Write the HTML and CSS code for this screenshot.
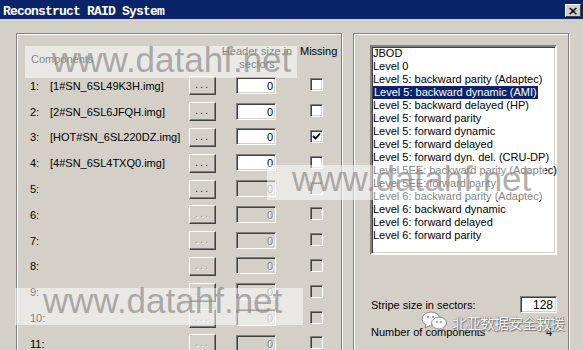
FILE: index.html
```html
<!DOCTYPE html>
<html lang="en">
<head>
    <meta charset="UTF-8">
    <meta name="viewport" content="width=device-width, initial-scale=1.0">
    <title>Reconstruct RAID System</title>
    <link rel="stylesheet" href="styles.css">
</head>
<body>
    <div class="titlebar">
        <span class="title">Reconstruct RAID System</span>
        <span class="close">&#215;</span>
    </div>
    <div class="dialog">
        <div class="group left-group">
            <div class="head">
                <span class="h-comp">Components</span>
                <span class="h-size">Header size in<br>sectors</span>
                <span class="h-miss">Missing</span>
            </div>
            <div class="row">
                <span class="num">1:</span><span class="file">[1#SN_6SL49K3H.img]</span>
                <span class="browse">...</span><span class="size">0</span><span class="check"></span>
            </div>
            <div class="row">
                <span class="num">2:</span><span class="file">[2#SN_6SL6JFQH.img]</span>
                <span class="browse">...</span><span class="size">0</span><span class="check"></span>
            </div>
            <div class="row">
                <span class="num">3:</span><span class="file">[HOT#SN_6SL220DZ.img]</span>
                <span class="browse">...</span><span class="size">0</span>
                <span class="check"><svg width="11" height="11" viewBox="0 0 11 11"><polyline points="2,5 4.5,7.5 9,2.5" fill="none" stroke="#000" stroke-width="1.8"/></svg></span>
            </div>
            <div class="row">
                <span class="num">4:</span><span class="file">[4#SN_6SL4TXQ0.img]</span>
                <span class="browse">...</span><span class="size">0</span><span class="check"></span>
            </div>
            <div class="row">
                <span class="num">5:</span><span class="file"></span>
                <span class="browse">...</span><span class="size off">0</span><span class="check off"></span>
            </div>
            <div class="row">
                <span class="num">6:</span><span class="file"></span>
                <span class="browse off">...</span><span class="size off">0</span><span class="check off"></span>
            </div>
            <div class="row">
                <span class="num">7:</span><span class="file"></span>
                <span class="browse off">...</span><span class="size off">0</span><span class="check off"></span>
            </div>
            <div class="row">
                <span class="num">8:</span><span class="file"></span>
                <span class="browse off">...</span><span class="size off">0</span><span class="check off"></span>
            </div>
            <div class="row">
                <span class="num">9:</span><span class="file"></span>
                <span class="browse off">...</span><span class="size off">0</span><span class="check off"></span>
            </div>
            <div class="row">
                <span class="num">10:</span><span class="file"></span>
                <span class="browse off">...</span><span class="size off">0</span><span class="check off"></span>
            </div>
            <div class="row">
                <span class="num">11:</span><span class="file"></span>
                <span class="browse off">...</span><span class="size off">0</span><span class="check off"></span>
            </div>
        </div>

        <div class="group right-group">
            <div class="listbox">
                <div class="item">JBOD</div>
                <div class="item">Level 0</div>
                <div class="item">Level 5: backward parity (Adaptec)</div>
                <div class="item"><span class="selected">Level 5: backward dynamic (AMI)</span></div>
                <div class="item">Level 5: backward delayed (HP)</div>
                <div class="item">Level 5: forward parity</div>
                <div class="item">Level 5: forward dynamic</div>
                <div class="item">Level 5: forward delayed</div>
                <div class="item">Level 5: forward dyn. del. (CRU-DP)</div>
                <div class="item">Level 5EE: backward parity (Adaptec)</div>
                <div class="item">Level 5EE: forward parity</div>
                <div class="item">Level 6: backward parity (Adaptec)</div>
                <div class="item">Level 6: backward dynamic</div>
                <div class="item">Level 6: forward delayed</div>
                <div class="item">Level 6: forward parity</div>
            </div>
            <div class="stripe">
                <span>Stripe size in sectors:</span>
                <span class="stripe-input">128</span>
            </div>
            <div class="count">
                <span>Number of components</span>
                <span>4</span>
            </div>
        </div>
    </div>

    <!-- watermarks over the screenshot -->
    <div class="wm-band band1"></div>
    <div class="wm-text text1">www.datahf.net</div>
    <div class="wm-band band2"></div>
    <div class="wm-text text2">www.datahf.net</div>
    <div class="wm-band band3"></div>
    <div class="wm-text text3">www.datahf.net</div>
    <div class="wechat">
        <svg width="27" height="20" viewBox="0 0 27 20">
            <ellipse cx="10" cy="8" rx="9" ry="7" fill="#fafafa" stroke="#8a8a8a" stroke-width="1"/>
            <path d="M5 13 L4 17 L9 14.5" fill="#fafafa" stroke="#8a8a8a" stroke-width="1"/>
            <ellipse cx="18" cy="12" rx="7.5" ry="6" fill="#fafafa" stroke="#8a8a8a" stroke-width="1"/>
            <path d="M22 17 L23.5 19.5 L19 17.5" fill="#fafafa" stroke="#8a8a8a" stroke-width="1"/>
            <circle cx="7" cy="6" r="1" fill="#8a8a8a"/>
            <circle cx="12" cy="6" r="1" fill="#8a8a8a"/>
            <circle cx="16" cy="11" r="0.9" fill="#8a8a8a"/>
            <circle cx="20" cy="11" r="0.9" fill="#8a8a8a"/>
        </svg>
        <span class="wechat-name">北亚数据安全救援</span>
    </div>
</body>
</html>
```

FILE: styles.css
```css
body {
    margin: 0;
    width: 583px;
    height: 350px;
    overflow: hidden;
    position: relative;
    background: #d4d0c8;
    font-family: 'Liberation Sans', Arial, sans-serif;
    font-size: 11px;
    color: #000;
}
.titlebar {
    height: 19px;
    background: #0a246a;
    display: flex;
    justify-content: space-between;
    align-items: flex-start;
}
.title {
    font-family: 'Liberation Mono', monospace;
    font-weight: bold;
    font-size: 13px;
    letter-spacing: -0.8px;
    line-height: 14px;
    color: #fff;
    padding: 5px 0 0 3px;
}
.close {
    width: 14px;
    height: 11px;
    margin: 4px 2px 0 0;
    background: #d4d0c8;
    border: 1px solid;
    border-color: #fff #404040 #404040 #fff;
    font-family: 'DejaVu Sans', sans-serif;
    font-weight: bold;
    font-size: 13px;
    line-height: 11px;
    text-align: center;
}
.dialog {
    display: flex;
    gap: 11px;
    padding: 14px 0 0 16px;
}
.group {
    height: 330px;
    border: 1px solid #808080;
    box-shadow: inset 1px 1px 0 #fff, 1px 1px 0 #fff;
    box-sizing: border-box;
}
.left-group {
    width: 326px;
    padding-left: 13px;
}
.right-group {
    width: 216px;
    padding: 11px 0 0 16px;
}

/* left side: components table */
.head {
    height: 39px;
    display: flex;
    align-items: flex-start;
    padding-top: 11px;
    box-sizing: border-box;
    line-height: 13px;
}
.h-comp {
    width: 186px;
    margin-top: 8px;
    padding-left: 1px;
}
.h-size {
    width: 80px;
    text-align: center;
}
.h-miss {
    margin-left: 3px;
}
.row {
    height: 25.8px;
    display: flex;
    align-items: center;
}
.num {
    width: 20px;
}
.file {
    width: 139px;
}
.browse {
    width: 25px;
    height: 17px;
    background: #d4d0c8;
    border: 1px solid;
    border-color: #fff #404040 #404040 #fff;
    box-shadow: inset -1px -1px 0 #808080;
    text-align: center;
    line-height: 15px;
    letter-spacing: 2px;
    color: #333;
}
.browse.off {
    color: #a0a0a0;
    text-shadow: 1px 1px 0 #fff;
}
.size {
    width: 36px;
    height: 15px;
    margin-left: 20px;
    margin-top: -1px;
    padding-right: 2px;
    background: #fff;
    border: 1px solid;
    border-color: #808080 #fff #fff #808080;
    box-shadow: inset 1px 1px 0 #404040, inset -1px -1px 0 #d4d0c8;
    text-align: right;
    line-height: 16px;
}
.size.off {
    background: #d4d0c8;
    color: #808080;
    text-shadow: 1px 1px 0 #fff;
}
.check {
    width: 11px;
    height: 11px;
    margin-left: 34px;
    margin-top: -2px;
    background: #fff;
    border: 1px solid;
    border-color: #808080 #fff #fff #808080;
    box-shadow: inset 1px 1px 0 #404040, inset -1px -1px 0 #d4d0c8;
    display: flex;
}
.check.off {
    background: #d4d0c8;
}

/* right side: RAID levels */
.listbox {
    width: 183px;
    height: 206px;
    background: #fff;
    border: 2px solid;
    border-color: #808080 #fff #fff #808080;
    box-shadow: inset 1px 1px 0 #404040, inset -1px -1px 0 #d4d0c8;
}
.item {
    height: 13px;
    line-height: 13px;
    padding-left: 1px;
    white-space: nowrap;
}
.selected {
    display: inline-block;
    background: #0a246a;
    color: #fff;
    padding: 0 1px;
}
.stripe {
    width: 187px;
    margin-top: 41px;
    display: flex;
    justify-content: space-between;
    align-items: center;
    padding-left: 1px;
    box-sizing: border-box;
}
.stripe-input {
    width: 32px;
    height: 15px;
    padding-right: 3px;
    background: #fff;
    border: 1px solid;
    border-color: #808080 #fff #fff #808080;
    box-shadow: inset 1px 1px 0 #404040, inset -1px -1px 0 #d4d0c8;
    text-align: right;
    font-size: 12px;
    line-height: 16px;
}
.count {
    width: 187px;
    margin-top: 13px;
    display: flex;
    justify-content: space-between;
    padding: 0 5px 0 1px;
    box-sizing: border-box;
}

/* watermarks */
.wm-band {
    position: absolute;
    background: rgba(255, 255, 255, 0.5);
}
.band1 {
    left: 25px;
    top: 46px;
    width: 272px;
    height: 32px;
}
.band2 {
    left: 267px;
    top: 165px;
    width: 278px;
    height: 35px;
}
.band3 {
    left: 15px;
    top: 288px;
    width: 288px;
    height: 37px;
}
.wm-text {
    position: absolute;
    font-family: 'Liberation Sans', Arial, sans-serif;
    font-size: 35px;
    line-height: 34px;
    color: rgba(140, 140, 140, 0.7);
    white-space: nowrap;
}
.text1 {
    left: 52px;
    top: 43px;
}
.text2 {
    left: 292px;
    top: 162px;
}
.text3 {
    left: 43px;
    top: 284px;
}
.wechat {
    position: absolute;
    left: 421px;
    top: 311px;
    display: flex;
    align-items: flex-start;
    gap: 4px;
}
.wechat-name {
    font-family: 'Noto Sans CJK SC', sans-serif;
    font-size: 15px;
    line-height: 20px;
    letter-spacing: -1px;
    color: #f6f6f6;
    text-shadow: 0 0 1px #555, 1px 1px 1px #777;
    margin-top: 2px;
}
```
